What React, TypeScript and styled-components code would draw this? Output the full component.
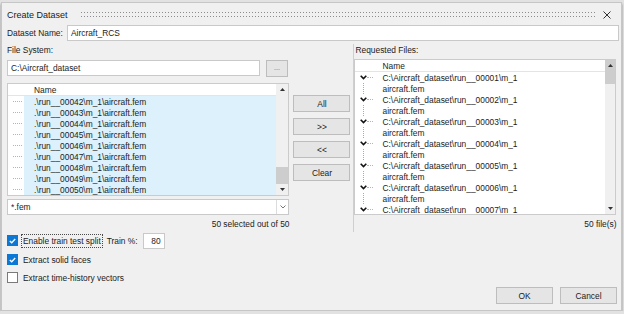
import styled, { createGlobalStyle } from 'styled-components';

const GlobalStyle = createGlobalStyle`
  html, body {
    margin: 0;
    padding: 0;
    background: #e2e2e2;
  }
  body {
    font-family: 'Liberation Sans', Arial, sans-serif;
    font-size: 8.4px;
    color: #1b1b1b;
  }
`;

const Dialog = styled.div`
  box-sizing: border-box;
  width: 621px;
  height: 309px;
  margin: 2px 0 0 1px;
  padding: 0 2px 0 5px;
  background: #f0f0f0;
  border: 1px solid #c6c6c6;
  box-shadow: 0 2px 2px rgba(0, 0, 0, 0.4);
  display: flex;
  flex-direction: column;
`;

const TitleBar = styled.div`
  height: 21px;
  padding-top: 1px;
  display: flex;
  align-items: center;
`;

const Title = styled.span`
  font-size: 9px;
  margin-right: 13px;
`;

const Grip = styled.div`
  flex: 1;
  height: 5px;
  background-image: linear-gradient(to right, #8c8c8c 1px, transparent 1px),
    linear-gradient(to right, #8c8c8c 1px, transparent 1px);
  background-size: 3px 1px, 3px 1px;
  background-position: 0 0, 0 4px;
  background-repeat: repeat-x;
`;

const CloseButton = styled.div`
  width: 8px;
  height: 8px;
  margin: 0 8px 0 6px;
  display: flex;
`;

const FormRow = styled.div`
  display: flex;
  align-items: center;
  height: 16px;
`;

const FieldLabel = styled.span<{ $width?: number }>`
  width: ${(p) => (p.$width ? `${p.$width}px` : 'auto')};
  flex: none;
  white-space: nowrap;
`;

const TextBox = styled.div<{ $width?: number; $align?: string }>`
  box-sizing: border-box;
  height: 16px;
  ${(p) => (p.$width ? `width: ${p.$width}px; flex: none;` : 'flex: 1;')}
  background: #fff;
  border: 1px solid #c9c9c9;
  padding: 0 3px;
  display: flex;
  align-items: center;
  justify-content: ${(p) => p.$align || 'flex-start'};
  white-space: nowrap;
`;

const Main = styled.div`
  display: flex;
  margin-top: 3px;
`;

const LeftColumn = styled.div`
  width: 283px;
  display: flex;
  flex-direction: column;
`;

const SectionLabel = styled.div<{ $indent?: number }>`
  height: 13px;
  line-height: 13px;
  padding-left: ${(p) => p.$indent || 0}px;
`;

const PathRow = styled.div`
  display: flex;
  align-items: flex-start;
  gap: 6px;
  margin-top: 3px;
  height: 17px;
`;

const PushButton = styled.div<{ $width: number }>`
  box-sizing: border-box;
  width: ${(p) => p.$width}px;
  height: 17px;
  flex: none;
  background: #e5e5e5;
  border: 1px solid #bdbdbd;
  display: flex;
  align-items: center;
  justify-content: center;
  white-space: nowrap;
`;

const BrowseDots = styled.span`
  color: #666;
  font-size: 7px;
  margin-top: -2px;
`;

const ListBox = styled.div<{ $height: number; $top: number }>`
  box-sizing: border-box;
  height: ${(p) => p.$height}px;
  margin-top: ${(p) => p.$top}px;
  background: #fff;
  border: 1px solid #cbcbcb;
  display: flex;
  overflow: hidden;
`;

const ListContent = styled.div`
  flex: 1;
  display: flex;
  flex-direction: column;
  min-width: 0;
  overflow: hidden;
`;

const ListHeader = styled.div<{ $indent: number }>`
  height: 12px;
  flex: none;
  box-sizing: border-box;
  border-bottom: 1px solid #e4e4e4;
  display: flex;
  align-items: center;
  padding-left: ${(p) => p.$indent}px;
`;

const FileRow = styled.div`
  height: 11px;
  flex: none;
  display: flex;
`;

const TreeCell = styled.div<{ $width: number }>`
  width: ${(p) => p.$width}px;
  flex: none;
  display: flex;
  align-items: center;
`;

const Dash = styled.span<{ $left: number; $width: number }>`
  margin-left: ${(p) => p.$left}px;
  width: ${(p) => p.$width}px;
  border-top: 1px dotted #b4b4b4;
`;

const VLine = styled.span<{ $left: number }>`
  margin-left: ${(p) => p.$left}px;
  align-self: stretch;
  border-left: 1px dotted #aaaaaa;
`;

const SelectedCell = styled.div`
  flex: 1;
  background: #dcf1fb;
  padding-left: 10px;
  display: flex;
  align-items: center;
  white-space: nowrap;
`;

const Scrollbar = styled.div<{ $width: number }>`
  width: ${(p) => p.$width}px;
  flex: none;
  background: #f0f0f0;
  display: flex;
  flex-direction: column;
`;

const ScrollArrow = styled.div`
  height: 11px;
  flex: none;
  display: flex;
  align-items: center;
  justify-content: center;
`;

const ScrollTrack = styled.div`
  flex: 1;
`;

const ScrollThumb = styled.div<{ $height: number; $withArrow?: boolean }>`
  box-sizing: border-box;
  height: ${(p) => p.$height}px;
  flex: none;
  background: #cdcdcd;
  display: flex;
  justify-content: center;
  padding-top: ${(p) => (p.$withArrow ? 4 : 0)}px;
`;

const Combo = styled.div`
  box-sizing: border-box;
  height: 16px;
  margin-top: 3px;
  background: #fff;
  border: 1px solid #c9c9c9;
  display: flex;
`;

const ComboText = styled.div`
  flex: 1;
  padding-left: 3px;
  display: flex;
  align-items: center;
`;

const ComboArrow = styled.div`
  width: 11px;
  border-left: 1px solid #dcdcdc;
  display: flex;
  align-items: center;
  justify-content: center;
`;

const Counter = styled.div`
  height: 13px;
  line-height: 13px;
  margin-top: 3px;
  text-align: right;
`;

const OptionRow = styled.div<{ $top: number }>`
  height: 15px;
  margin-top: ${(p) => p.$top}px;
  display: flex;
  align-items: center;
`;

const CheckBox = styled.div<{ $checked?: boolean }>`
  box-sizing: border-box;
  width: 11px;
  height: 11px;
  flex: none;
  background: ${(p) => (p.$checked ? '#0a78d4' : '#fff')};
  border: 1px solid ${(p) => (p.$checked ? '#0a78d4' : '#7a7a7a')};
  display: flex;
  align-items: center;
  justify-content: center;
  margin-right: 3px;
`;

const OptionLabel = styled.span<{ $focused?: boolean }>`
  box-sizing: border-box;
  height: 14px;
  padding: 0 1px;
  border: 1px dotted ${(p) => (p.$focused ? '#4a4a4a' : 'transparent')};
  display: flex;
  align-items: center;
  white-space: nowrap;
`;

const TrainLabel = styled.span`
  margin: 0 5px 0 4px;
`;

const ButtonColumn = styled.div`
  width: 57px;
  margin-left: 4px;
  padding-top: 51px;
  display: flex;
  flex-direction: column;
  gap: 6px;
`;

const RightColumn = styled.div`
  width: 265px;
  margin-left: 3px;
  align-self: flex-start;
  border-left: 1px solid #cfcfcf;
  display: flex;
  flex-direction: column;
`;

const RightInner = styled.div`
  width: 262px;
  display: flex;
  flex-direction: column;
  padding-bottom: 1px;
`;

const RequestedItem = styled.div`
  display: flex;
  flex-direction: column;
  flex: none;
`;

const ItemLine = styled.div`
  height: 11px;
  display: flex;
`;

const ItemText = styled.div`
  padding-left: 5px;
  display: flex;
  align-items: center;
  white-space: nowrap;
`;

const Footer = styled.div`
  margin-top: auto;
  padding: 0 2px 6px 0;
  display: flex;
  justify-content: flex-end;
  gap: 7px;
`;

const Chevron = () => (
  <svg width="7" height="5" viewBox="0 0 7 5" style={{ marginLeft: 5, flex: 'none' }}>
    <polyline points="0.7,0.8 3.5,3.6 6.3,0.8" fill="none" stroke="#111" strokeWidth="1.6" />
  </svg>
);

const Triangle = ({ up }: { up?: boolean }) => (
  <svg width="5" height="3" viewBox="0 0 5 3">
    <polygon points={up ? '0,3 2.5,0 5,3' : '0,0 2.5,3 5,0'} fill="#333" />
  </svg>
);

const Tick = () => (
  <svg width="7" height="6" viewBox="0 0 7 6">
    <polyline points="0.8,3 2.7,4.8 6.2,1" fill="none" stroke="#fff" strokeWidth="1.3" />
  </svg>
);

const leftFiles = ['00042', '00043', '00044', '00045', '00046', '00047', '00048', '00049', '00050'];
const requested = ['00001', '00002', '00003', '00004', '00005', '00006', '00007'];

export default function App() {
  return (
    <>
      <GlobalStyle />
      <Dialog>
        <TitleBar>
          <Title>Create Dataset</Title>
          <Grip />
          <CloseButton>
            <svg width="8" height="8" viewBox="0 0 8 8">
              <path d="M0.5 0.5 L7.5 7.5 M7.5 0.5 L0.5 7.5" stroke="#333" strokeWidth="1" />
            </svg>
          </CloseButton>
        </TitleBar>

        <FormRow>
          <FieldLabel $width={60}>Dataset Name:</FieldLabel>
          <TextBox>Aircraft_RCS</TextBox>
        </FormRow>

        <Main>
          <LeftColumn>
            <SectionLabel>File System:</SectionLabel>
            <PathRow>
              <TextBox $width={253}>C:\Aircraft_dataset</TextBox>
              <PushButton $width={22}>
                <BrowseDots>...</BrowseDots>
              </PushButton>
            </PathRow>

            <ListBox $height={113} $top={6}>
              <ListContent>
                <ListHeader $indent={26}>Name</ListHeader>
                {leftFiles.map((n) => (
                  <FileRow key={n}>
                    <TreeCell $width={16}>
                      <Dash $left={5} $width={9} />
                    </TreeCell>
                    <SelectedCell>{`.\\run__${n}\\m_1\\aircraft.fem`}</SelectedCell>
                  </FileRow>
                ))}
              </ListContent>
              <Scrollbar $width={12}>
                <ScrollArrow>
                  <Triangle up />
                </ScrollArrow>
                <ScrollTrack />
                <ScrollThumb $height={17} />
                <ScrollArrow>
                  <Triangle />
                </ScrollArrow>
              </Scrollbar>
            </ListBox>

            <Combo>
              <ComboText>*.fem</ComboText>
              <ComboArrow>
                <svg width="6" height="4" viewBox="0 0 6 4">
                  <polyline points="0.5,0.5 3,3 5.5,0.5" fill="none" stroke="#777" strokeWidth="1" />
                </svg>
              </ComboArrow>
            </Combo>
            <Counter>50 selected out of 50</Counter>

            <OptionRow $top={2}>
              <CheckBox $checked>
                <Tick />
              </CheckBox>
              <OptionLabel $focused>Enable train test split</OptionLabel>
              <TrainLabel>Train %:</TrainLabel>
              <TextBox $width={22} $align="flex-end">80</TextBox>
            </OptionRow>
            <OptionRow $top={4}>
              <CheckBox $checked>
                <Tick />
              </CheckBox>
              <OptionLabel>Extract solid faces</OptionLabel>
            </OptionRow>
            <OptionRow $top={3}>
              <CheckBox />
              <OptionLabel>Extract time-history vectors</OptionLabel>
            </OptionRow>
          </LeftColumn>

          <ButtonColumn>
            <PushButton $width={57}>All</PushButton>
            <PushButton $width={57}>&gt;&gt;</PushButton>
            <PushButton $width={57}>&lt;&lt;</PushButton>
            <PushButton $width={57}>Clear</PushButton>
          </ButtonColumn>

          <RightColumn>
            <RightInner>
              <SectionLabel $indent={1}>Requested Files:</SectionLabel>
              <ListBox $height={156} $top={2}>
                <ListContent>
                  <ListHeader $indent={27}>Name</ListHeader>
                  {requested.map((n) => (
                    <RequestedItem key={n}>
                      <ItemLine>
                        <TreeCell $width={22}>
                          <Chevron />
                          <Dash $left={0} $width={6} />
                        </TreeCell>
                        <ItemText>{`C:\\Aircraft_dataset\\run__${n}\\m_1`}</ItemText>
                      </ItemLine>
                      <ItemLine>
                        <TreeCell $width={22}>
                          <VLine $left={8} />
                        </TreeCell>
                        <ItemText>aircraft.fem</ItemText>
                      </ItemLine>
                    </RequestedItem>
                  ))}
                </ListContent>
                <Scrollbar $width={10}>
                  <ScrollThumb $height={24} $withArrow>
                    <Triangle up />
                  </ScrollThumb>
                  <ScrollTrack />
                  <ScrollArrow>
                    <Triangle />
                  </ScrollArrow>
                </Scrollbar>
              </ListBox>
              <Counter>50 file(s)</Counter>
            </RightInner>
          </RightColumn>
        </Main>

        <Footer>
          <PushButton $width={57}>OK</PushButton>
          <PushButton $width={57}>Cancel</PushButton>
        </Footer>
      </Dialog>
    </>
  );
}
